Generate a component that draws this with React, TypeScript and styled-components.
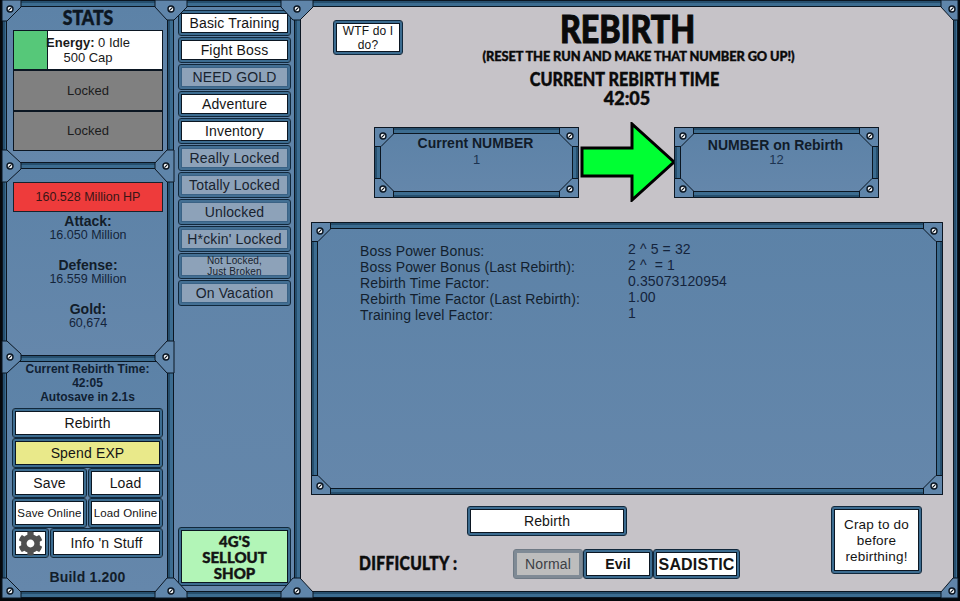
import React from "react";
import styled, { createGlobalStyle } from "styled-components";
import { FaCog } from "react-icons/fa";

const INK = "#0b1622";
const BAR_DARK = "#264f6e";
const BAR_MID = "#3c6c90";
const PLATE = "#5f85aa";
const SANS = `"Liberation Sans", Arial, sans-serif`;
const DISPLAY = `"Lato", "Open Sans", sans-serif`;

const Global = createGlobalStyle`
  html, body { margin: 0; padding: 0; background: #05080c; }
  * { box-sizing: border-box; }
  #root { width: 960px; height: 601px; overflow: hidden; }
`;

const Shell = styled.div`
  position: relative;
  width: 960px;
  height: 601px;
  padding: 0 2px 3px;
  display: flex;
  font-family: ${SANS};
  color: #16222f;
`;

const VBar = styled.div<{ $w: number }>`
  flex: none;
  width: ${(p) => p.$w}px;
  background: linear-gradient(
    to right,
    ${INK} 0 1px,
    ${BAR_DARK} 1px 3px,
    ${BAR_MID} 3px calc(100% - 1px),
    ${INK} calc(100% - 1px)
  );
`;

const HBar = styled.div`
  flex: none;
  height: 7px;
  background: linear-gradient(
    to bottom,
    ${INK} 0 1px,
    ${BAR_DARK} 1px 3px,
    ${BAR_MID} 3px 6px,
    ${INK} 6px
  );
`;

const Column = styled.div<{ $w: number }>`
  flex: none;
  width: ${(p) => p.$w}px;
  display: flex;
  flex-direction: column;
`;

const Sheet = styled.div<{ $h?: number; $pl?: number; $pr?: number; $pt?: number }>`
  ${(p) => (p.$h ? `height: ${p.$h}px; flex: none;` : "flex: 1;")}
  padding: ${(p) => p.$pt ?? 0}px ${(p) => p.$pr ?? 4}px 0 ${(p) => p.$pl ?? 6}px;
  background: linear-gradient(to bottom, #5c82a7, #6587ab);
  display: flex;
  flex-direction: column;
`;

const StatsTitle = styled.div`
  height: 23px;
  line-height: 21px;
  text-align: center;
  font-family: ${DISPLAY};
  font-weight: 900;
  font-size: 20px;
  color: #0d1722;
  -webkit-text-stroke: 0.5px #0d1722;
  transform: scaleX(0.88);
`;

const ResourceList = styled.div`
  width: 150px;
  height: 121px;
  border: 1px solid ${INK};
  display: flex;
  flex-direction: column;
  gap: 2px;
  background: ${INK};
`;

const EnergyRow = styled.div`
  height: 38px;
  flex: none;
  background: #fff;
  position: relative;
  font-size: 13px;
  line-height: 15px;
  text-align: center;
  color: #1a1a1a;
`;

const EnergyFill = styled.div`
  position: absolute;
  left: 0;
  top: 0;
  bottom: 0;
  width: 34px;
  background: #56c879;
  border-right: 1px solid ${INK};
`;

const EnergyText = styled.div`
  position: relative;
  width: 100%;
  padding-top: 4px;
`;

const LockedRow = styled.div`
  flex: 1;
  background: #808080;
  display: flex;
  align-items: center;
  justify-content: center;
  font-size: 13px;
  color: #1c1c1c;
`;

const HpBar = styled.div`
  height: 30px;
  background: #ee3b3b;
  border: 1px solid #17222d;
  display: flex;
  align-items: center;
  justify-content: center;
  font-size: 12.5px;
  color: #3a1616;
`;

const StatGroups = styled.div`
  margin-top: 2px;
  display: flex;
  flex-direction: column;
  gap: 16px;
  text-align: center;
`;

const StatGroup = styled.div`
  line-height: 14px;
`;

const StatLabel = styled.div`
  font-weight: 700;
  font-size: 14px;
  color: #121d2a;
`;

const StatValue = styled.div`
  font-size: 12.5px;
  color: #14243a;
`;

const TimeInfo = styled.div`
  font-weight: 700;
  font-size: 12px;
  line-height: 14px;
  text-align: center;
  color: #101f33;
  height: 46px;
`;

const Btn = styled.button<{
  $tone?: "white" | "yellow" | "muted" | "gray" | "mint";
  $size?: number;
  $bold?: boolean;
}>`
  margin: 0;
  padding: 0 1px;
  display: flex;
  align-items: center;
  justify-content: center;
  text-align: center;
  font-family: ${SANS};
  font-size: ${(p) => p.$size ?? 14}px;
  font-weight: ${(p) => (p.$bold ? 700 : 400)};
  letter-spacing: 0.15px;
  line-height: 15px;
  border-radius: 3px;
  border: 1px solid ${(p) => (p.$tone === "gray" ? "#6f7a85" : "#11283c")};
  color: ${(p) => (p.$tone === "gray" ? "#3c4046" : p.$tone === "muted" ? "#18232f" : "#141414")};
  background: ${(p) =>
    ({ white: "#fff", yellow: "#e9e98a", muted: "#8da2b9", gray: "#bdbdbd", mint: "#b2f5b7" })[
      p.$tone ?? "white"
    ]};
  box-shadow: inset 0 0 0 2px
      ${(p) => (p.$tone === "gray" ? "#7f8a95" : p.$tone === "muted" ? "#436f93" : BAR_MID)},
    inset 0 0 0 3px ${(p) => (p.$tone === "muted" ? "#3a6285" : p.$tone === "gray" ? "#7f8a95" : INK)};
`;

const SideBtn = styled(Btn)`
  height: 30px;
  width: 100%;
`;

const BtnRow = styled.div<{ $cols?: string }>`
  display: grid;
  grid-template-columns: ${(p) => p.$cols ?? "1fr 1fr"};
  gap: 1px;
  height: 30px;
`;

const GearGlyph = styled(FaCog)`
  width: 25px;
  height: 25px;
  color: #505050;
`;

const Build = styled.div`
  margin-top: 12px;
  text-align: center;
  font-weight: 700;
  font-size: 14px;
  line-height: 15px;
  letter-spacing: 0.2px;
  color: #121d2a;
`;

const NavList = styled.div`
  display: flex;
  flex-direction: column;
  gap: 1px;
`;

const NavBtn = styled(Btn)<{ $tight?: boolean }>`
  height: 26px;
  width: 113px;
  line-height: ${(p) => (p.$tight ? 11 : 15)}px;
`;

const ShopBtn = styled(Btn)`
  margin-top: auto;
  margin-bottom: 5px;
  width: 113px;
  height: 59px;
  font-family: ${DISPLAY};
  font-weight: 900;
  font-size: 15px;
  line-height: 16px;
  letter-spacing: 0;
  -webkit-text-stroke: 0.4px #141414;
`;

const MainSheet = styled.div`
  flex: 1;
  background: #c6c3c8;
  display: flex;
  flex-direction: column;
`;

const Header = styled.header`
  display: grid;
  grid-template-columns: 1fr auto 1fr;
  height: 100px;
  color: #0a0a0a;
`;

const WtfBtn = styled(Btn)`
  margin: 13px 0 0 32px;
  width: 70px;
  height: 35px;
  font-size: 12px;
  line-height: 14px;
`;

const TitleStack = styled.div`
  text-align: center;
  font-family: ${DISPLAY};
  font-weight: 900;
  white-space: nowrap;
  -webkit-text-stroke: 0.4px #0a0a0a;
`;

const Title = styled.h1`
  margin: 0;
  font-size: 37px;
  line-height: 44px;
  font-weight: 900;
  -webkit-text-stroke: 1px #0a0a0a;
  transform: scaleX(0.87);
`;

const Subtitle = styled.div`
  margin-top: -1px;
  font-size: 13.5px;
  line-height: 12px;
  letter-spacing: -0.1px;
  transform: translateX(11px) scaleX(0.948);
`;

const RunTimeLabel = styled.div`
  margin-top: 8px;
  font-size: 18px;
  line-height: 19px;
  transform: translateX(-3px) scaleX(0.9);
`;

const RunTimeValue = styled.div`
  font-size: 18px;
  line-height: 19px;
`;

const ArrowRow = styled.div`
  margin-top: 15px;
  padding-right: 1px;
  height: 80px;
  display: flex;
  align-items: center;
  justify-content: center;
`;

const ArrowGlyph = styled.svg`
  flex: none;
  width: 97px;
  height: 80px;
  margin-right: -2px;
`;

const Plate = styled.div`
  position: relative;
  background: linear-gradient(to bottom, #5c82a7, #6587ab);
  box-shadow: inset 0 0 0 1px ${INK}, inset 0 0 0 3px ${BAR_DARK}, inset 0 0 0 6px ${BAR_MID},
    inset 0 0 0 7px ${INK};
`;

const NumberPlate = styled(Plate)`
  flex: none;
  width: 205px;
  height: 71px;
  padding-top: 8px;
  text-align: center;
`;

const PlateTitle = styled.div<{ $low?: boolean }>`
  font-weight: 700;
  font-size: 14px;
  line-height: 16px;
  height: 16px;
  position: relative;
  left: -1px;
  top: ${(p) => (p.$low ? 2 : 0)}px;
  color: #111c2a;
`;

const PlateValue = styled.div`
  margin-top: 1px;
  font-size: 13px;
  line-height: 16px;
  color: #1c3350;
`;

const DetailPlate = styled(Plate)`
  margin: 20px 10px 0;
  height: 273px;
  padding: 21px 0 0 49px;
`;

const DetailGrid = styled.div`
  display: grid;
  grid-template-columns: 268px 1fr;
  grid-auto-rows: 16px;
  font-size: 14px;
  line-height: 16px;
  letter-spacing: 0.13px;
`;

const DetailLabel = styled.div`
  color: #131f2e;
`;

const DetailValue = styled.div`
  position: relative;
  top: -2px;
  color: #14243c;
  white-space: pre;
`;

const Footer = styled.div`
  margin-top: 11px;
  display: flex;
  justify-content: space-between;
  padding-right: 31px;
`;

const FooterLeft = styled.div`
  display: flex;
  flex-direction: column;
`;

const RebirthBtn = styled(Btn)`
  margin-left: 166px;
  width: 160px;
  height: 30px;
`;

const DifficultyRow = styled.div`
  margin: 13px 0 0 58px;
  display: flex;
  align-items: center;
`;

const DifficultyLabel = styled.div`
  width: 154px;
  font-family: ${DISPLAY};
  font-weight: 900;
  font-size: 19px;
  letter-spacing: 0.4px;
  color: #0c0c0c;
  padding-bottom: 4px;
  transform-origin: left center;
  transform: scaleX(0.82);
  -webkit-text-stroke: 0.5px #0c0c0c;
`;

const DiffBtn = styled(Btn)<{ $w: number }>`
  width: ${(p) => p.$w}px;
  height: 30px;
`;

const CrapBtn = styled(Btn)`
  width: 91px;
  height: 68px;
  padding-top: 1px;
  font-size: 13.5px;
  line-height: 16px;
  letter-spacing: 0.2px;
`;

const Part = styled.svg<{ $x: number; $y: number }>`
  position: absolute;
  left: ${(p) => p.$x}px;
  top: ${(p) => p.$y}px;
  overflow: visible;
  z-index: 2;
`;

const CornerSvg = styled.svg<{ $pos: string }>`
  position: absolute;
  width: 20px;
  height: 20px;
  ${(p) => (p.$pos[0] === "t" ? "top: 0;" : "bottom: 0;")}
  ${(p) => (p.$pos[1] === "l" ? "left: 0;" : "right: 0;")}
`;

const Screw = ({ x, y }: { x: number; y: number }) => (
  <g>
    <circle cx={x} cy={y} r={3} fill="#fff" stroke={INK} strokeWidth={1.4} />
    <line x1={x - 1.6} y1={y + 1.6} x2={x + 1.6} y2={y - 1.6} stroke={INK} strokeWidth={1.2} />
  </g>
);

const CORNER: [number, number][] = [
  [0.5, 0.5],
  [19.5, 0.5],
  [19.5, 7],
  [7, 19.5],
  [0.5, 19.5],
];

const Corner = ({ pos }: { pos: "tl" | "tr" | "bl" | "br" }) => {
  const mx = (x: number) => (pos[1] === "r" ? 20 - x : x);
  const my = (y: number) => (pos[0] === "b" ? 20 - y : y);
  return (
    <CornerSvg $pos={pos} viewBox="0 0 20 20">
      <polygon
        points={CORNER.map(([x, y]) => `${mx(x)},${my(y)}`).join(" ")}
        fill={PLATE}
        stroke={INK}
        strokeWidth={1}
      />
      <Screw x={mx(9)} y={my(9)} />
    </CornerSvg>
  );
};

const Corners = () => (
  <>
    <Corner pos="tl" />
    <Corner pos="tr" />
    <Corner pos="bl" />
    <Corner pos="br" />
  </>
);

type Pt = [number, number];
type JointData = { pts: Pt[]; screw: Pt };

const midTop = (cx: number): Pt[] => [
  [cx - 16, 0],
  [cx + 16, 0],
  [cx + 16, 7],
  [cx + 3, 20],
  [cx - 4, 20],
  [cx - 16, 7],
];

const midBottom = (cx: number): Pt[] => [
  [cx - 16, 598],
  [cx + 16, 598],
  [cx + 16, 592],
  [cx + 3, 578],
  [cx - 4, 578],
  [cx - 16, 592],
];

const leftJoint = (c: number): Pt[] => [
  [2, c - 16],
  [7, c - 16],
  [21, c - 3],
  [21, c + 3],
  [7, c + 16],
  [2, c + 16],
];

const rightJoint = (c: number): Pt[] => [
  [174, c - 16],
  [167, c - 16],
  [155, c - 3],
  [155, c + 3],
  [167, c + 16],
  [174, c + 16],
];

const JOINTS: JointData[] = [
  { pts: [[2, 0], [21, 0], [21, 7], [7, 21], [2, 21]], screw: [10, 9] },
  { pts: midTop(171), screw: [171, 9] },
  { pts: midTop(297), screw: [297, 9] },
  { pts: [[941, 0], [958, 0], [958, 20], [953, 20], [941, 7]], screw: [952, 9] },
  { pts: leftJoint(166), screw: [10, 166] },
  { pts: rightJoint(166), screw: [166, 166] },
  { pts: leftJoint(357), screw: [10, 357] },
  { pts: rightJoint(357), screw: [166, 357] },
  { pts: [[2, 598], [21, 598], [21, 592], [7, 578], [2, 578]], screw: [10, 591] },
  { pts: midBottom(171), screw: [171, 591] },
  { pts: midBottom(297), screw: [297, 591] },
  { pts: [[941, 598], [958, 598], [958, 578], [953, 578], [941, 592]], screw: [952, 591] },
];

const Joint = ({ pts, screw }: JointData) => {
  const x0 = Math.min(...pts.map((p) => p[0]));
  const y0 = Math.min(...pts.map((p) => p[1]));
  const w = Math.max(...pts.map((p) => p[0])) - x0;
  const h = Math.max(...pts.map((p) => p[1])) - y0;
  return (
    <Part $x={x0} $y={y0} width={w} height={h} viewBox={`0 0 ${w} ${h}`}>
      <polygon
        points={pts.map(([x, y]) => `${x - x0},${y - y0}`).join(" ")}
        fill={PLATE}
        stroke={INK}
        strokeWidth={1}
      />
      <Screw x={screw[0] - x0} y={screw[1] - y0} />
    </Part>
  );
};

const NAV: { label: React.ReactNode; tone: "white" | "muted"; tight?: boolean }[] = [
  { label: "Basic Training", tone: "white" },
  { label: "Fight Boss", tone: "white" },
  { label: "NEED GOLD", tone: "muted" },
  { label: "Adventure", tone: "white" },
  { label: "Inventory", tone: "white" },
  { label: "Really Locked", tone: "muted" },
  { label: "Totally Locked", tone: "muted" },
  { label: "Unlocked", tone: "muted" },
  { label: "H*ckin' Locked", tone: "muted" },
  { label: <>Not Locked,<br />Just Broken</>, tone: "muted", tight: true },
  { label: "On Vacation", tone: "muted" },
];

const DETAILS: [string, string][] = [
  ["Boss Power Bonus:", "2 ^ 5 = 32"],
  ["Boss Power Bonus (Last Rebirth):", "2 ^  = 1"],
  ["Rebirth Time Factor:", "0.35073120954"],
  ["Rebirth Time Factor (Last Rebirth):", "1.00"],
  ["Training level Factor:", "1"],
];

const STATS: [string, string][] = [
  ["Attack:", "16.050 Million"],
  ["Defense:", "16.559 Million"],
  ["Gold:", "60,674"],
];

export default function App() {
  return (
    <>
      <Global />
      <Shell>
        <VBar $w={5} />
        <Column $w={160}>
          <HBar />
          <Sheet $h={155}>
            <StatsTitle>STATS</StatsTitle>
            <ResourceList>
              <EnergyRow>
                <EnergyFill />
                <EnergyText>
                  <b>Energy:</b> 0 Idle
                  <br />
                  500 Cap
                </EnergyText>
              </EnergyRow>
              <LockedRow>Locked</LockedRow>
              <LockedRow>Locked</LockedRow>
            </ResourceList>
          </Sheet>
          <HBar />
          <Sheet $h={186} $pt={13}>
            <HpBar>160.528 Million HP</HpBar>
            <StatGroups>
              {STATS.map(([l, v]) => (
                <StatGroup key={l}>
                  <StatLabel>{l}</StatLabel>
                  <StatValue>{v}</StatValue>
                </StatGroup>
              ))}
            </StatGroups>
          </Sheet>
          <HBar />
          <Sheet $pl={5}>
            <TimeInfo>
              Current Rebirth Time:
              <br />
              42:05
              <br />
              Autosave in 2.1s
            </TimeInfo>
            <SideBtn>Rebirth</SideBtn>
            <SideBtn $tone="yellow">Spend EXP</SideBtn>
            <BtnRow>
              <Btn>Save</Btn>
              <Btn>Load</Btn>
            </BtnRow>
            <BtnRow>
              <Btn $size={11.5}>Save Online</Btn>
              <Btn $size={11.5}>Load Online</Btn>
            </BtnRow>
            <BtnRow $cols="37px 1fr">
              <Btn aria-label="Settings">
                <GearGlyph />
              </Btn>
              <Btn>Info 'n Stuff</Btn>
            </BtnRow>
            <Build>Build 1.200</Build>
          </Sheet>
          <HBar />
        </Column>
        <VBar $w={7} />
        <Column $w={120}>
          <HBar />
          <Sheet $pl={4} $pt={3}>
            <NavList>
              {NAV.map((n, i) => (
                <NavBtn key={i} $tone={n.tone} $size={n.tight ? 10 : undefined} $tight={n.tight}>
                  {n.label}
                </NavBtn>
              ))}
            </NavList>
            <ShopBtn $tone="mint">
              4G'S
              <br />
              SELLOUT
              <br />
              SHOP
            </ShopBtn>
          </Sheet>
          <HBar />
        </Column>
        <VBar $w={7} />
        <Column $w={652}>
          <HBar />
          <MainSheet>
            <Header>
              <div>
                <WtfBtn>
                  WTF do I
                  <br />
                  do?
                </WtfBtn>
              </div>
              <TitleStack>
                <Title>REBIRTH</Title>
                <Subtitle>(RESET THE RUN AND MAKE THAT NUMBER GO UP!)</Subtitle>
                <RunTimeLabel>CURRENT REBIRTH TIME</RunTimeLabel>
                <RunTimeValue>42:05</RunTimeValue>
              </TitleStack>
              <div />
            </Header>
            <ArrowRow>
              <NumberPlate>
                <Corners />
                <PlateTitle>Current NUMBER</PlateTitle>
                <PlateValue>1</PlateValue>
              </NumberPlate>
              <ArrowGlyph viewBox="0 0 97 80">
                <polygon
                  points="3,26 53,26 53,2 95,40 53,78 53,54 3,54"
                  fill="#00ff33"
                  stroke="#000"
                  strokeWidth={3}
                />
              </ArrowGlyph>
              <NumberPlate>
                <Corners />
                <PlateTitle $low>NUMBER on Rebirth</PlateTitle>
                <PlateValue>12</PlateValue>
              </NumberPlate>
            </ArrowRow>
            <DetailPlate>
              <Corners />
              <DetailGrid>
                {DETAILS.map(([l, v]) => (
                  <React.Fragment key={l}>
                    <DetailLabel>{l}</DetailLabel>
                    <DetailValue>{v}</DetailValue>
                  </React.Fragment>
                ))}
              </DetailGrid>
            </DetailPlate>
            <Footer>
              <FooterLeft>
                <RebirthBtn>Rebirth</RebirthBtn>
                <DifficultyRow>
                  <DifficultyLabel>DIFFICULTY :</DifficultyLabel>
                  <DiffBtn $w={70} $tone="gray">Normal</DiffBtn>
                  <DiffBtn $w={70} $bold>Evil</DiffBtn>
                  <DiffBtn $w={87} $bold $size={16}>SADISTIC</DiffBtn>
                </DifficultyRow>
              </FooterLeft>
              <CrapBtn>
                Crap to do
                <br />
                before
                <br />
                rebirthing!
              </CrapBtn>
            </Footer>
          </MainSheet>
          <HBar />
        </Column>
        <VBar $w={5} />
        {JOINTS.map((j) => (
          <Joint key={j.screw.join()} {...j} />
        ))}
      </Shell>
    </>
  );
}
